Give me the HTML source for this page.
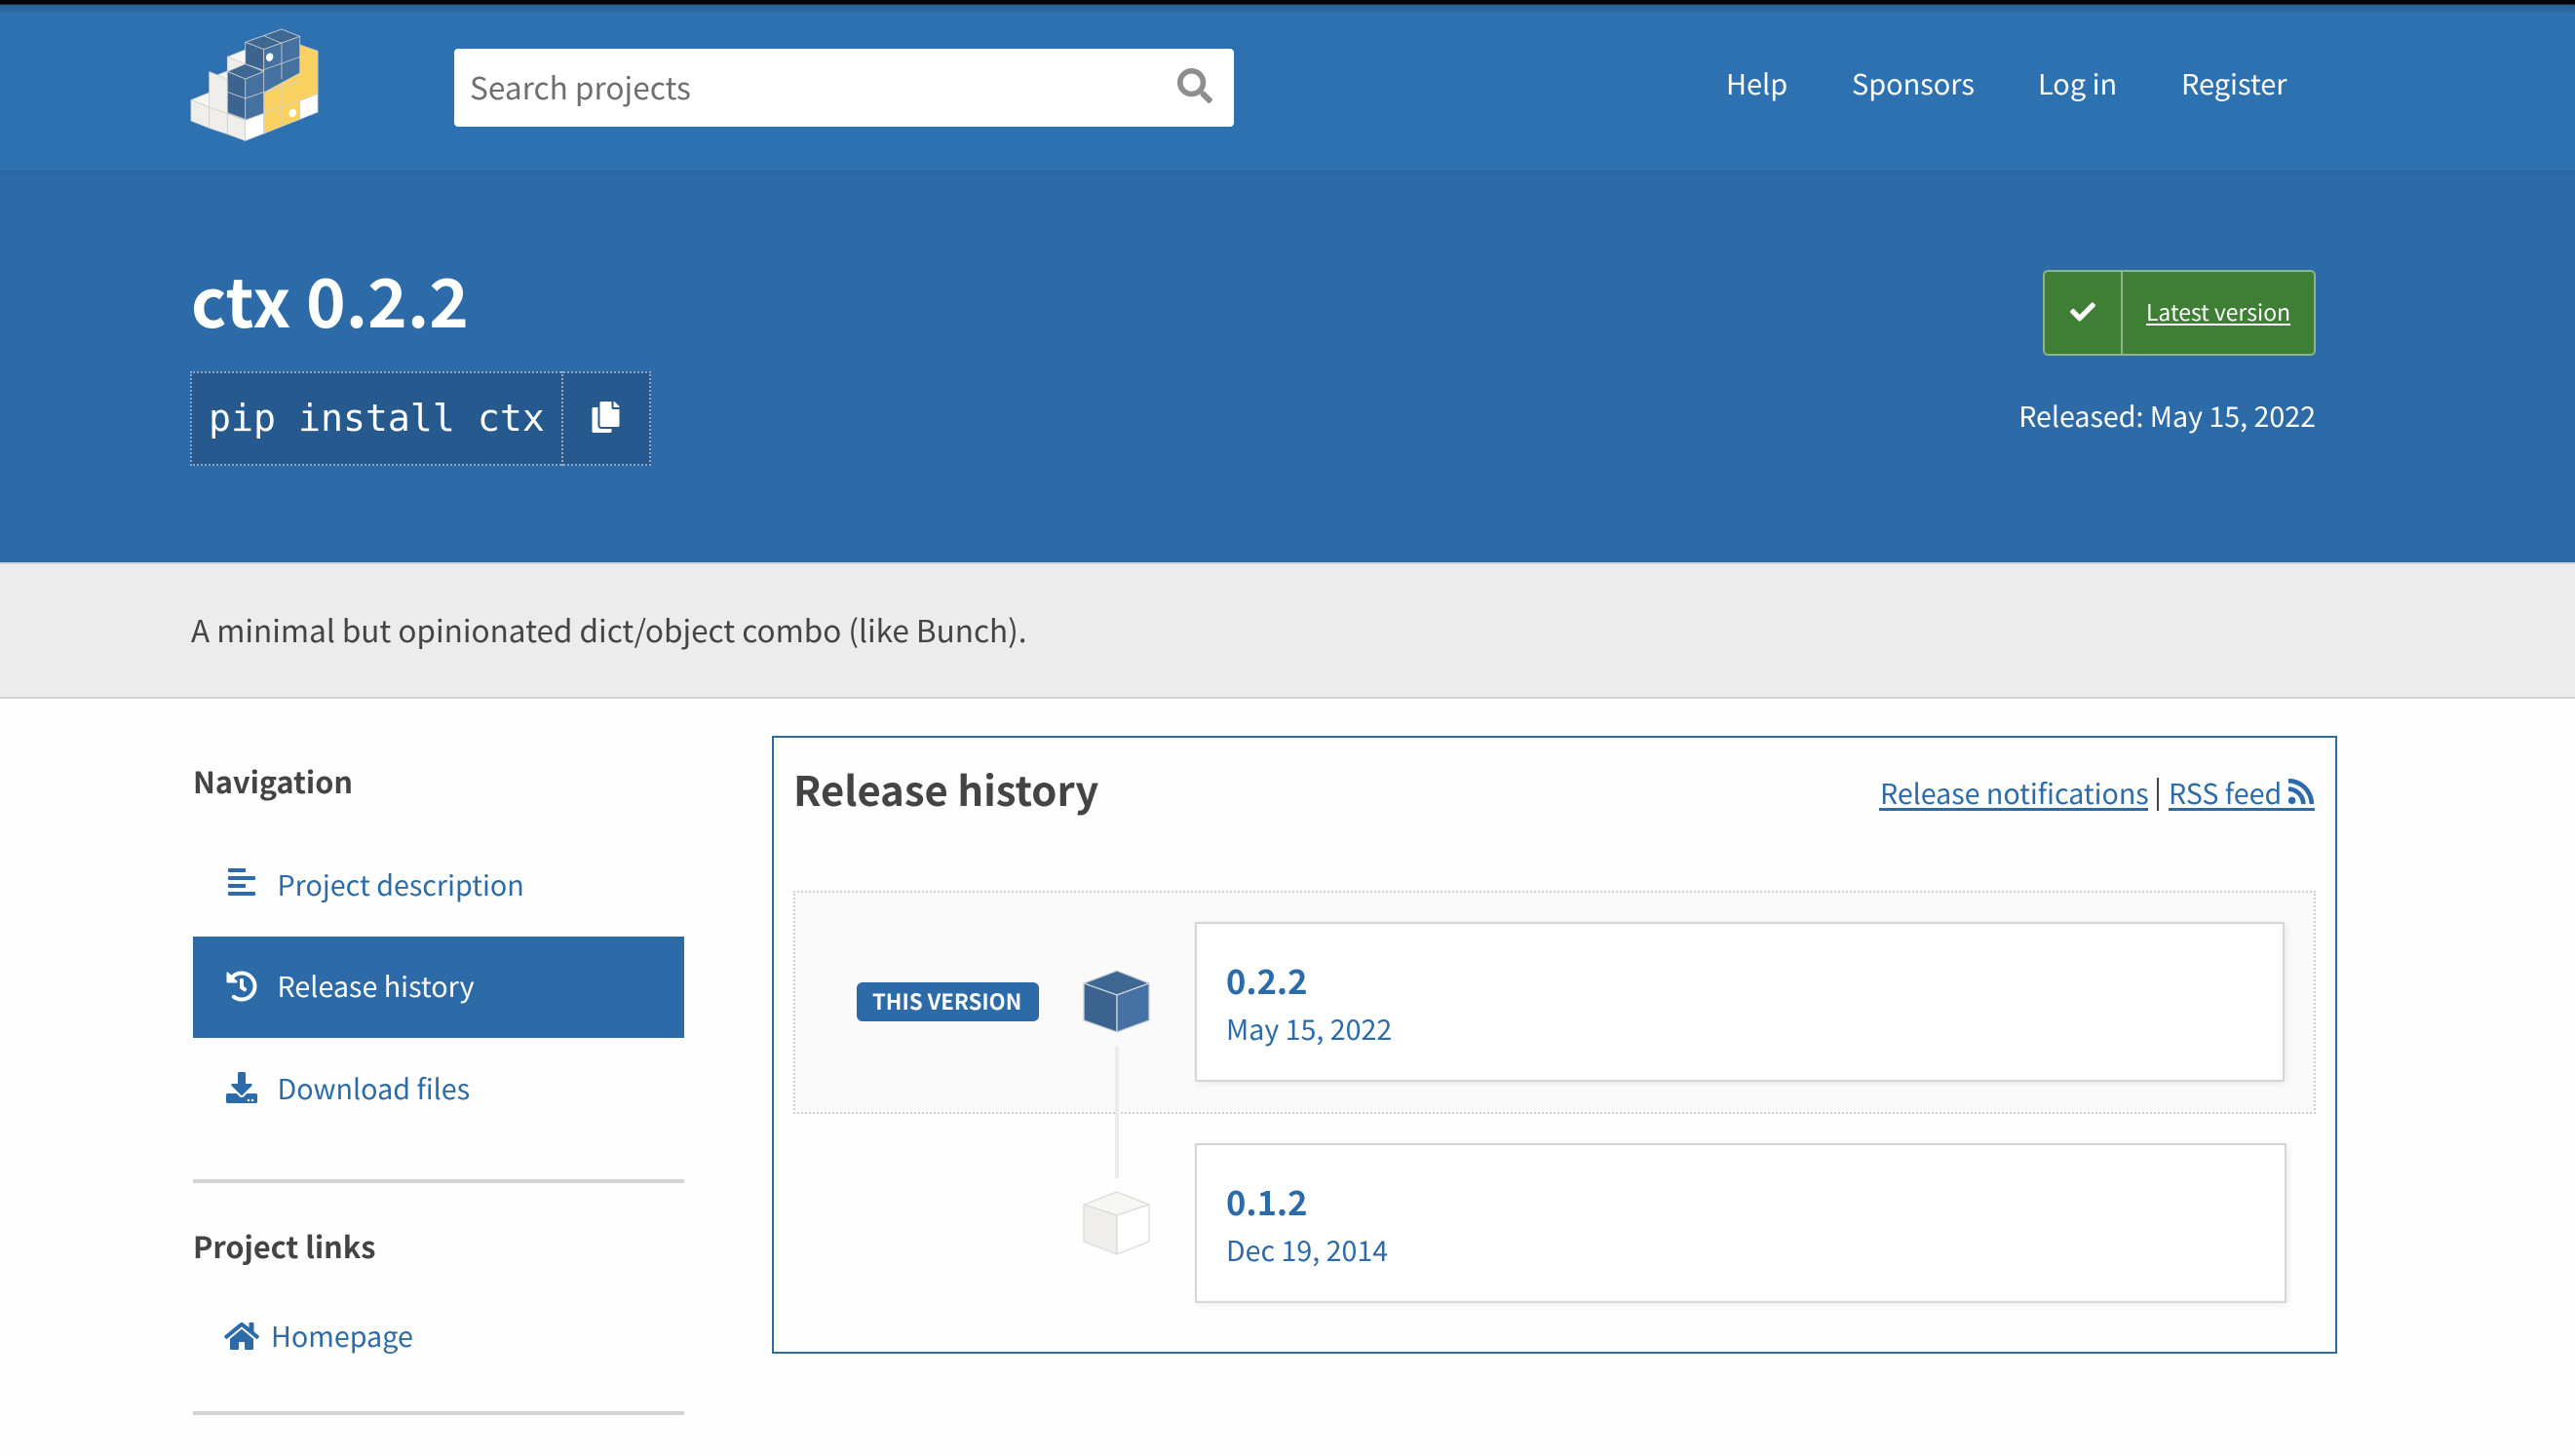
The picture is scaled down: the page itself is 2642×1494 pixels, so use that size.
<!DOCTYPE html>
<html lang="en">
<head>
<meta charset="utf-8">
<title>ctx 0.2.2</title>
<style>
html,body{margin:0;padding:0;width:2642px;height:1494px;overflow:hidden;background:#fefefe;}
body{position:relative;font-family:"Noto Sans CJK JP","Liberation Sans",sans-serif;color:#444;}
.a{position:absolute;white-space:nowrap;}
.t{position:absolute;white-space:nowrap;line-height:60px;height:60px;}
svg{position:absolute;display:block;}
a{color:inherit;text-decoration:none;}
.blue{color:#2c6ba8;}
.w{color:#fff;}
.b{font-weight:700;}
</style>
</head>
<body>
<!-- header -->
<div class="a" style="left:0;top:0;width:2642px;height:175px;background:#2e71b1;"></div>
<div class="a" style="left:0;top:0;width:2642px;height:14px;background:linear-gradient(#000 0,#000 4px,#2a5c8c 5px,#2e71b1 14px);"></div>
<div class="a" style="left:0;top:175px;width:2642px;height:402px;background:#2c6ba8;border-top:2px solid #2a66a1;box-sizing:border-box;"></div>
<div class="a" style="left:0;top:577px;width:2642px;height:140px;background:#ececec;border-top:2px solid #d3d3d3;border-bottom:2px solid #d3d3d3;box-sizing:border-box;"></div>

<!-- logo -->
<svg style="left:180px;top:15px" width="170" height="140" viewBox="0 0 510 420" stroke-linejoin="round">
<g stroke="#cfcfd2" stroke-width="2.5">
<polygon points="160,130 215,108 272,130 215,152" fill="#f5f5f1"/>
<polygon points="104,195 160,174 215,196 160,218" fill="#f5f5f1"/>
<polygon points="48,263 104,240 160,262 104,285" fill="#f5f5f1"/>
<polygon points="160,130 215,152 215,240 160,218" fill="#efeeea"/>
<polygon points="104,176 160,198 160,305 104,285" fill="#efeeea"/>
<polygon points="48,263 104,285 104,349 48,327" fill="#efeeea"/>
<polygon points="104,285 160,305 160,368 104,349" fill="#efeeea"/>
<polygon points="160,305 215,325 215,388 160,368" fill="#efeeea"/>
<polygon points="215,325 272,304 272,366 215,388" fill="#fff"/>
<polygon points="383,265 438,244 438,300 383,322" fill="#fff"/>
<polygon points="383,93 438,112 438,244 383,265 383,322 272,366 272,240 383,180" fill="#f9d161"/>
<polygon points="215,85 327,45 383,67 272,107" fill="#3e6792"/>
<polygon points="215,85 272,107 272,172 215,152" fill="#3c648f"/>
<polygon points="272,107 383,67 383,180 272,240 272,304 215,325 215,198 272,175" fill="#44719f"/>
<polygon points="160,175 215,152 272,175 215,198" fill="#3e6792"/>
<polygon points="160,175 215,198 215,322 160,302" fill="#3c648f"/>
</g>
<g stroke="#cfcfd2" stroke-width="2.5" fill="none">
<path d="M272 65L327 88M327 88V198M272 175V240M215 258L160 238M215 258L272 238M272 170L383 130M272 303L383 265M327 216V345M272 240L383 203"/>
</g>
<ellipse cx="290" cy="131" rx="11" ry="13" transform="rotate(20 290 131)" fill="#fff"/>
<ellipse cx="361" cy="303" rx="11" ry="13" transform="rotate(20 361 303)" fill="#fff"/>
</svg>

<!-- search -->
<div class="a" style="left:466px;top:50px;width:800px;height:80px;background:#fff;border-radius:4px;"></div>
<div class="t" style="left:482px;top:59px;font-size:31.6px;color:#6f6f6f;">Search projects</div>
<svg style="left:1208px;top:70px" width="36" height="36" viewBox="0 0 512 512"><path fill="#8e8e8e" d="M505 442.7L405.3 343c-4.5-4.5-10.6-7-17-7H372c27.6-35.3 44-79.7 44-128C416 93.1 322.9 0 208 0S0 93.1 0 208s93.1 208 208 208c48.3 0 92.7-16.4 128-44v16.3c0 6.4 2.5 12.5 7 17l99.7 99.7c9.4 9.4 24.6 9.4 33.9 0l28.3-28.3c9.4-9.4 9.4-24.6.1-34zM208 336c-70.7 0-128-57.2-128-128 0-70.7 57.2-128 128-128 70.7 0 128 57.2 128 128 0 70.7-57.2 128-128 128z"/></svg>

<!-- nav -->
<a class="t w" style="left:1771px;top:55px;font-size:28.9px;">Help</a>
<a class="t w" style="left:1900px;top:55px;font-size:28.9px;">Sponsors</a>
<a class="t w" style="left:2091px;top:55px;font-size:28.9px;">Log in</a>
<a class="t w" style="left:2238px;top:55px;font-size:28.9px;">Register</a>

<!-- hero -->
<div class="t w b" style="left:196px;top:276px;font-size:69px;">ctx 0.2.2</div>
<div class="a" style="left:195px;top:381px;width:473px;height:97px;background:#265a8f;border:2px dotted #8fa9c6;box-sizing:border-box;"></div>
<div class="a" style="left:576px;top:381px;width:0;height:97px;border-left:2px dotted #8fa9c6;"></div>
<div class="t w" style="left:214px;top:400px;font-family:'DejaVu Sans Mono','Liberation Mono',monospace;font-size:38.2px;">pip install ctx</div>
<svg style="left:607px;top:412px" width="29" height="32" viewBox="0 0 448 512"><path fill="#fff" d="M320 448v40c0 13.255-10.745 24-24 24H24c-13.255 0-24-10.745-24-24V120c0-13.255 10.745-24 24-24h72v296c0 30.879 25.121 56 56 56h168zm0-344V0H152c-13.255 0-24 10.745-24 24v368c0 13.255 10.745 24 24 24h272c13.255 0 24-10.745 24-24V128H344c-13.2 0-24-10.8-24-24zm120.971-31.029L375.029 7.029A24 24 0 0 0 358.059 0H352v96h96v-6.059a24 24 0 0 0-7.029-16.97z"/></svg>

<div class="a" style="left:2096px;top:277px;width:280px;height:88px;background:#3e7e35;border:2px solid #8fb489;border-radius:5px;box-sizing:border-box;"></div>
<div class="a" style="left:2176px;top:279px;width:2px;height:84px;background:#8fb489;"></div>
<svg style="left:2123px;top:307px" width="28" height="26" viewBox="0 0 512 512"><path fill="#fff" d="M173.898 439.404l-166.4-166.4c-9.997-9.997-9.997-26.206 0-36.204l36.203-36.204c9.997-9.998 26.207-9.998 36.204 0L192 312.69 432.095 72.596c9.997-9.997 26.207-9.997 36.204 0l36.203 36.204c9.997 9.997 9.997 26.206 0 36.204l-294.4 294.401c-9.998 9.997-26.207 9.997-36.204-.001z"/></svg>
<a class="t w" style="left:2202px;top:289px;font-size:22.9px;text-decoration:underline;text-underline-offset:3px;">Latest version</a>
<div class="t w" style="right:266px;top:397px;font-size:28.6px;">Released: May 15, 2022</div>

<!-- description -->
<div class="t" style="left:196px;top:616px;font-size:31.5px;color:#444;">A minimal but opinionated dict/object combo (like Bunch).</div>

<!-- sidebar -->
<div class="t b" style="left:198px;top:771px;font-size:30.6px;color:#444;">Navigation</div>
<svg style="left:234px;top:889px" width="28" height="32" viewBox="0 0 448 512"><path fill="#2c6ba8" d="M12.83 352h262.34A12.82 12.82 0 0 0 288 339.17v-38.34A12.82 12.82 0 0 0 275.17 288H12.83A12.82 12.82 0 0 0 0 300.83v38.34A12.82 12.82 0 0 0 12.83 352zm0-256h262.34A12.82 12.82 0 0 0 288 83.17V44.83A12.82 12.82 0 0 0 275.17 32H12.83A12.82 12.82 0 0 0 0 44.83v38.34A12.82 12.82 0 0 0 12.83 96zM432 160H16a16 16 0 0 0-16 16v32a16 16 0 0 0 16 16h416a16 16 0 0 0 16-16v-32a16 16 0 0 0-16-16zm0 256H16a16 16 0 0 0-16 16v32a16 16 0 0 0 16 16h416a16 16 0 0 0 16-16v-32a16 16 0 0 0-16-16z"/></svg>
<a class="t blue" style="left:284.5px;top:878px;font-size:28.7px;">Project description</a>
<div class="a" style="left:198px;top:961px;width:504px;height:104px;background:#2c6ba8;"></div>
<svg style="left:232px;top:996px" width="32" height="32" viewBox="0 0 512 512"><path fill="#fff" d="M504 255.531c.253 136.64-111.18 248.372-247.82 248.468-59.015.042-113.223-20.53-155.822-54.911-11.077-8.94-11.905-25.541-1.839-35.607l11.267-11.267c8.609-8.609 22.353-9.551 31.891-1.984C173.062 425.135 212.781 440 256 440c101.705 0 184-82.311 184-184 0-101.705-82.311-184-184-184-48.814 0-93.149 18.969-126.068 49.932l50.754 50.754c10.08 10.08 2.941 27.314-11.313 27.314H24c-8.837 0-16-7.163-16-16V38.627c0-14.254 17.234-21.393 27.314-11.314l49.372 49.372C129.209 34.136 189.552 8 256 8c136.81 0 247.747 110.78 248 247.531zm-180.912 78.784l9.823-12.63c8.138-10.463 6.253-25.542-4.21-33.679L288 256.349V152c0-13.255-10.745-24-24-24h-16c-13.255 0-24 10.745-24 24v135.651l65.409 50.874c10.463 8.137 25.541 6.253 33.679-4.21z"/></svg>
<a class="t w" style="left:284.5px;top:982px;font-size:28.7px;">Release history</a>
<svg style="left:232px;top:1100px" width="32" height="32" viewBox="0 0 512 512"><path fill="#2c6ba8" d="M216 0h80c13.3 0 24 10.7 24 24v168h87.7c17.8 0 26.7 21.5 14.1 34.1L269.7 378.3c-7.5 7.5-19.8 7.5-27.3 0L90.1 226.1c-12.6-12.6-3.7-34.1 14.1-34.1H192V24c0-13.3 10.7-24 24-24zm296 376v112c0 13.3-10.7 24-24 24H24c-13.3 0-24-10.7-24-24V376c0-13.3 10.7-24 24-24h146.7l49 49c20.1 20.1 52.5 20.1 72.6 0l49-49H488c13.3 0 24 10.7 24 24zm-124 88c0-11-9-20-20-20s-20 9-20 20 9 20 20 20 20-9 20-20zm64 0c0-11-9-20-20-20s-20 9-20 20 9 20 20 20 20-9 20-20z"/></svg>
<a class="t blue" style="left:284.5px;top:1087px;font-size:28.7px;">Download files</a>
<div class="a" style="left:198px;top:1210px;width:504px;height:4px;background:#d3d3d3;"></div>
<div class="t b" style="left:198px;top:1248px;font-size:30.6px;color:#444;">Project links</div>
<svg style="left:230px;top:1355px" width="36" height="32" viewBox="0 0 576 512"><path fill="#2c6ba8" d="M280.37 148.26L96 300.11V464a16 16 0 0 0 16 16l112.06-.29a16 16 0 0 0 15.92-16V368a16 16 0 0 1 16-16h64a16 16 0 0 1 16 16v95.64a16 16 0 0 0 16 16.05L464 480a16 16 0 0 0 16-16V300L295.67 148.26a12.19 12.19 0 0 0-15.3 0zM571.6 251.47L488 182.56V44.05a12 12 0 0 0-12-12h-56a12 12 0 0 0-12 12v72.61L318.47 43a48 48 0 0 0-61 0L4.34 251.47a12 12 0 0 0-1.6 16.9l25.5 31A12 12 0 0 0 45.15 301l235.22-193.74a12.19 12.19 0 0 1 15.3 0L530.9 301a12 12 0 0 0 16.9-1.6l25.5-31a12 12 0 0 0-1.7-16.93z"/></svg>
<a class="t blue" style="left:278px;top:1341px;font-size:28.7px;">Homepage</a>
<div class="a" style="left:198px;top:1448px;width:504px;height:4px;background:#d3d3d3;"></div>

<!-- main panel -->
<div class="a" style="left:792px;top:755px;width:1606px;height:634px;border:2px solid #2c6ba8;box-sizing:border-box;background:#fefefe;"></div>
<div class="t b" style="left:814px;top:780px;font-size:41.8px;color:#444;">Release history</div>
<a class="t blue" style="left:1929px;top:784px;font-size:28.6px;">Release notifications</a>
<div class="a" style="left:1928px;top:829px;width:276px;height:3px;background:#2c6ba8;"></div>
<div class="a" style="left:2213px;top:798px;width:2px;height:34px;background:#444;"></div>
<a class="t blue" style="left:2225px;top:784px;font-size:28.6px;">RSS feed</a>
<div class="a" style="left:2225px;top:829px;width:150px;height:3px;background:#2c6ba8;"></div>
<svg style="left:2347px;top:797px" width="28" height="30" viewBox="0 0 448 512"><path fill="#2c6ba8" d="M128.081 415.959c0 35.369-28.672 64.041-64.041 64.041S0 451.328 0 415.959s28.672-64.041 64.041-64.041 64.04 28.673 64.04 64.041zm175.66 47.25c-8.354-154.6-132.185-278.587-286.95-286.95C7.656 175.765 0 183.105 0 192.253v48.069c0 8.415 6.49 15.472 14.887 16.018 111.832 7.284 201.473 96.702 208.772 208.772.547 8.397 7.604 14.887 16.018 14.887h48.069c9.149.001 16.489-7.655 15.995-16.79zm144.249.288C439.596 229.677 251.465 40.445 16.503 32.01 7.473 31.686 0 38.981 0 48.016v48.068c0 8.625 6.835 15.645 15.453 15.999 191.179 7.839 344.627 161.316 352.465 352.465.353 8.618 7.373 15.453 15.999 15.453h48.068c9.034-.001 16.329-7.474 16.005-16.504z"/></svg>

<!-- release widget -->
<div class="a" style="left:814px;top:914px;width:1562px;height:229px;background:#fafafa;border:2px dotted #cfcfcf;box-sizing:border-box;"></div>
<div class="a" style="left:1144px;top:1074px;width:4px;height:135px;background:#ececec;"></div>
<div class="a" style="left:1226px;top:946px;width:1118px;height:164px;background:#fff;border:2px solid #d6d6d6;box-sizing:border-box;box-shadow:2px 2px 7px rgba(0,0,0,.07);"></div>
<div class="a" style="left:1226px;top:1173px;width:1120px;height:164px;background:#fff;border:2px solid #d6d6d6;box-sizing:border-box;box-shadow:2px 2px 7px rgba(0,0,0,.07);"></div>

<div class="a" style="left:879px;top:1008px;width:187px;height:40px;background:#2c6ba8;border-radius:6px;"></div>
<div class="t w b" style="left:895px;top:997px;font-size:22.1px;">THIS VERSION</div>

<svg style="left:1100px;top:990px" width="92" height="80" viewBox="1100 990 92 80">
<g stroke="#c9d3de" stroke-width="1.3" stroke-linejoin="round">
<polygon points="1146,996 1179,1009 1146,1021 1112,1009" fill="#3e6792"/>
<polygon points="1112,1009 1146,1021 1146,1059 1112,1047" fill="#3c648f"/>
<polygon points="1146,1021 1179,1009 1179,1047 1146,1059" fill="#4572a2"/>
</g>
</svg>
<svg style="left:1100px;top:1216px" width="92" height="80" viewBox="1100 1216 92 80">
<g stroke="#dcdcd8" stroke-width="1.3" stroke-linejoin="round">
<polygon points="1146,1223 1179,1236 1146,1247 1112,1236" fill="#f6f6f2"/>
<polygon points="1112,1236 1146,1247 1146,1287 1112,1274" fill="#efeeea"/>
<polygon points="1146,1247 1179,1236 1179,1274 1146,1287" fill="#fff"/>
</g>
</svg>

<a class="t blue b" style="left:1258px;top:975px;font-size:34.5px;">0.2.2</a>
<div class="t blue" style="left:1258px;top:1026px;font-size:28.6px;">May 15, 2022</div>
<a class="t blue b" style="left:1258px;top:1202px;font-size:34.5px;">0.1.2</a>
<div class="t blue" style="left:1258px;top:1253px;font-size:28.6px;">Dec 19, 2014</div>
</body>
</html>
